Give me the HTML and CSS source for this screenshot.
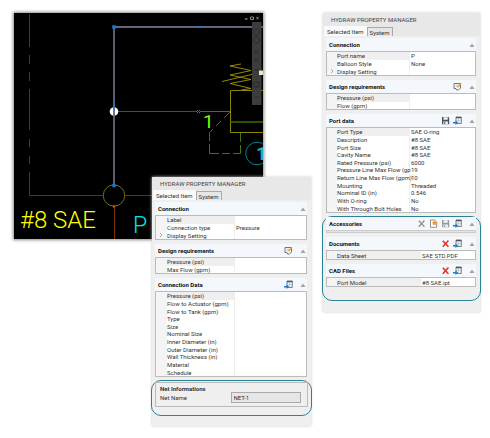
FILE: index.html
```
<!DOCTYPE html>
<html lang="en">
<head>
    <meta charset="UTF-8">
    <title>Hydraw Property Manager</title>
    <link rel="stylesheet" href="styles.css">
</head>
<body>
<svg class="symbols" aria-hidden="true">
    <symbol id="up" viewBox="0 0 6 6"><path d="M0.5 5L3 1.5L5.500 5Z" fill="#a3a3a3"/></symbol>
    <symbol id="more" viewBox="0 0 6 6"><path d="M2 1L4 3L2 5" fill="none" stroke="#999" stroke-width="0.8"/></symbol>
    <symbol id="note" viewBox="0 0 9 9">
        <path d="M1 1.500H7.500V6L5.500 8H3.500L3 6.500H1Z" fill="#fff" stroke="#666" stroke-width="0.9"/>
        <path d="M2.500 3.200H5M2.500 4.800H4" stroke="#999" stroke-width="0.6"/>
        <path d="M4.500 5.300L8 1.300" stroke="#e8952e" stroke-width="1.4"/>
    </symbol>
    <symbol id="link" viewBox="0 0 9 9">
        <path d="M3 1H8.300V7.500H3Z" fill="#eef2f6" stroke="#5d6670" stroke-width="0.8"/>
        <path d="M3 1.600H8.300" stroke="#4a545e" stroke-width="1.3"/>
        <path d="M5.600 2V7.500M3 4.500H8.300" stroke="#a9b3bd" stroke-width="0.5"/>
        <path d="M0 6H2.500V4.400L5.200 6.700L2.500 9V7.500H0Z" fill="#1c7cd0"/>
    </symbol>
    <symbol id="save" viewBox="0 0 9 9">
        <path d="M1 1H7.500L8.200 1.700V8.200H1Z" fill="currentColor"/>
        <path d="M2.500 1.300H6.700V3.700H2.500ZM2.300 5.400H6.900V8H2.300Z" fill="#f4f6f8"/>
        <path d="M3.200 6H4.300V8H3.200Z" fill="currentColor"/>
    </symbol>
    <symbol id="new" viewBox="0 0 9 9">
        <path d="M1.500 1H5.500L7.700 3V8.300H1.500Z" fill="#fff" stroke="#777" stroke-width="0.8"/>
        <path d="M5.500 1.200L6.300 2.800L8 3.200L6.900 4.500L7 6.200L5.400 5.500L3.800 6.200L4 4.500L2.800 3.200L4.600 2.800Z" fill="#f09a2c"/>
    </symbol>
    <symbol id="cross" viewBox="0 0 9 9"><path d="M1.800 1.800L7.400 7.800M7.400 1.500L1.800 7.800" stroke="currentColor" stroke-width="1.6"/></symbol>
</svg>

<main class="page">
    <div class="stage">
        <svg class="drawing" viewBox="0 0 249 226" role="img" aria-label="Hydraulic schematic">
            <rect width="249" height="226" fill="#000"/>
            <g transform="translate(-14 -13)" fill="none">
                <!-- manifold boundary -->
                <path d="M29.500 14V47M29.500 55V64M29.500 72V81M29.500 89V130M29.500 139V147M29.500 156V164M29.500 172V195.500H103M125 195.500H155" stroke="#7d107d"/>
                <!-- valve and spring -->
                <path d="M241 64L230 66L251 70.500L230 75L251 79.500L230 83.500L251 88.500L241 90M222 81.500L262 72" stroke="#a39900" stroke-width="0.9"/>
                <path d="M263 90.500H230.500V132.500H263" stroke="#8f8600"/>
                <path d="M230 122H263" stroke="#3d6b00" stroke-width="1.300"/>
                <path d="M230 112L224 118M221 121L216 126M213 129L209.500 132.500V141M209.500 144V153.500H219M222 153.500H230M233 153.500H240.500V145M240.500 142V133" stroke="#437600"/>
                <!-- pilot line -->
                <path d="M118 111.500H197" stroke="#8a3a08"/>
                <path d="M200 111.500H230" stroke="#3d7a06"/>
                <path d="M197 110L200 113M200 110L197 113" stroke="#d4401a"/>
                <!-- selected connection -->
                <circle cx="114" cy="111.500" r="4.300" fill="#fff"/>
                <path d="M263 27H114V185" stroke="#66657f" stroke-width="1.800"/>
                <path d="M112.200 25.200H115.800V28.800H112.200ZM196.500 26.300H201V27.700H196.500ZM113.300 104H114.700V109H113.300Z" fill="#1279dc"/>
                <!-- port -->
                <circle cx="114" cy="195.500" r="10.700" stroke="#857d00" stroke-width="0.9"/>
                <path d="M114.500 207V239" stroke="#7a3206"/>
                <circle cx="114" cy="185.500" r="1.900" fill="#1279dc"/>
                <circle cx="114" cy="206.500" r="1.200" fill="#e04a10"/>
                <circle cx="257" cy="153.500" r="11.300" stroke="#0d7f86"/>
                <!-- view controls -->
                <path d="M252 22H261.500V105H252Z" fill="#3d3d3d"/>
                <path d="M256.500 29A3 3 0 1 1 256.400 29M256.500 37A3 3 0 1 1 256.400 37M254 50L259 55M259 50L254 55M254 58L259 63M259 58L254 63M254 70H259M254 82H259V87H254ZM255 96L257 98L259 96" stroke="#292929"/>
                <path d="M259 70.500H263V75H259Z" fill="#e6e6c4"/>
                <path d="M245 19H247.500" stroke="#bbb"/>
                <path d="M250.500 17H253.500V19.500H250.500ZM256.500 16.800L258.500 19.300M258.500 16.800L256.500 19.300" stroke="#aaa" stroke-width="0.8"/>
            </g>
            <text class="cad-text port-label" x="6" y="215">#8 SAE</text>
            <text class="cad-text port-name" x="119" y="220">P</text>
            <text class="cad-text valve-port" x="189" y="115">1</text>
            <text class="cad-text balloon" x="242" y="147">1</text>
        </svg>

        <section class="panel connection-panel">
            <h1 class="title">HYDRAW PROPERTY MANAGER</h1>
            <div class="tabs" role="tablist">
                <button class="tab active" role="tab">Selected Item</button>
                <button class="tab" role="tab">System</button>
            </div>

            <div class="group">
                <div class="head"><h2>Connection</h2><button class="fold" aria-label="Collapse"><svg><use href="#up"/></svg></button></div>
                <table class="props three">
                    <tr class="current"><td></td><th scope="row">Label</th><td></td></tr>
                    <tr><td></td><th scope="row">Connection type</th><td>Pressure</td></tr>
                    <tr><td><button class="more" aria-label="Expand"><svg><use href="#more"/></svg></button></td><th scope="row">Display Setting</th><td></td></tr>
                </table>
            </div>

            <div class="group">
                <div class="head"><h2>Design requirements</h2><button class="tool" aria-label="Edit"><svg><use href="#note"/></svg></button><button class="fold" aria-label="Collapse"><svg><use href="#up"/></svg></button></div>
                <table class="props two">
                    <tr class="current"><td></td><th scope="row">Pressure (psi)</th><td></td></tr>
                    <tr><td></td><th scope="row">Max Flow (gpm)</th><td></td></tr>
                </table>
            </div>

            <div class="group">
                <div class="head"><h2>Connection Data</h2><button class="tool" aria-label="Load"><svg><use href="#link"/></svg></button><button class="fold" aria-label="Collapse"><svg><use href="#up"/></svg></button></div>
                <table class="props eleven">
                    <tr class="current"><td></td><th scope="row">Pressure (psi)</th><td></td></tr>
                    <tr><td></td><th scope="row">Flow to Actuator (gpm)</th><td></td></tr>
                    <tr><td></td><th scope="row">Flow to Tank (gpm)</th><td></td></tr>
                    <tr><td></td><th scope="row">Type</th><td></td></tr>
                    <tr><td></td><th scope="row">Size</th><td></td></tr>
                    <tr><td></td><th scope="row">Nominal Size</th><td></td></tr>
                    <tr><td></td><th scope="row">Inner Diameter (in)</th><td></td></tr>
                    <tr><td></td><th scope="row">Outer Diameter (in)</th><td></td></tr>
                    <tr><td></td><th scope="row">Wall Thickness (in)</th><td></td></tr>
                    <tr><td></td><th scope="row">Material</th><td></td></tr>
                    <tr><td></td><th scope="row">Schedule</th><td></td></tr>
                </table>
            </div>

            <div class="callout">
                <div class="net">
                    <h2>Net Informations</h2>
                    <div class="net-row">
                        <label for="net-name">Net Name</label>
                        <input type="text" id="net-name" value="NET-1" readonly>
                    </div>
                </div>
            </div>
        </section>
    </div>

    <section class="panel port-panel">
        <h1 class="title">HYDRAW PROPERTY MANAGER</h1>
        <div class="tabs" role="tablist">
            <button class="tab active" role="tab">Selected Item</button>
            <button class="tab" role="tab">System</button>
        </div>

        <div class="group">
            <div class="head"><h2>Connection</h2><button class="fold" aria-label="Collapse"><svg><use href="#up"/></svg></button></div>
            <table class="props three">
                <tr class="current"><td></td><th scope="row">Port name</th><td>P</td></tr>
                <tr><td></td><th scope="row">Balloon Style</th><td>None</td></tr>
                <tr><td><button class="more" aria-label="Expand"><svg><use href="#more"/></svg></button></td><th scope="row">Display Setting</th><td></td></tr>
            </table>
        </div>

        <div class="group">
            <div class="head"><h2>Design requirements</h2><button class="tool" aria-label="Edit"><svg><use href="#note"/></svg></button><button class="fold" aria-label="Collapse"><svg><use href="#up"/></svg></button></div>
            <table class="props two">
                <tr class="current"><td></td><th scope="row">Pressure (psi)</th><td></td></tr>
                <tr><td></td><th scope="row">Flow (gpm)</th><td></td></tr>
            </table>
        </div>

        <div class="group">
            <div class="head"><h2>Port data</h2><button class="tool" aria-label="Save"><svg><use href="#save"/></svg></button><button class="tool" aria-label="Load"><svg><use href="#link"/></svg></button><button class="fold" aria-label="Collapse"><svg><use href="#up"/></svg></button></div>
            <table class="props eleven">
                <tr class="current"><td></td><th scope="row">Port Type</th><td>SAE O-ring</td></tr>
                <tr><td></td><th scope="row">Description</th><td>#8 SAE</td></tr>
                <tr><td></td><th scope="row">Port Size</th><td>#8 SAE</td></tr>
                <tr><td></td><th scope="row">Cavity Name</th><td>#8 SAE</td></tr>
                <tr><td></td><th scope="row">Rated Pressure (psi)</th><td>6000</td></tr>
                <tr><td></td><th scope="row">Pressure Line Max Flow (gp</th><td>19</td></tr>
                <tr><td></td><th scope="row">Return Line Max Flow (gpm)</th><td>10</td></tr>
                <tr><td></td><th scope="row">Mounting</th><td>Threaded</td></tr>
                <tr><td></td><th scope="row">Nominal ID (in)</th><td>0.546</td></tr>
                <tr><td></td><th scope="row">With O-ring</th><td>No</td></tr>
                <tr><td></td><th scope="row">With Through Bolt Holes</th><td>No</td></tr>
            </table>
        </div>

        <div class="callout files">
            <div class="group">
                <div class="head"><h2>Accessories</h2><button class="tool off" aria-label="Delete"><svg><use href="#cross"/></svg></button><button class="tool" aria-label="New"><svg><use href="#new"/></svg></button><button class="tool off" aria-label="Save"><svg><use href="#save"/></svg></button><button class="tool" aria-label="Load"><svg><use href="#link"/></svg></button><button class="fold" aria-label="Collapse"><svg><use href="#up"/></svg></button></div>
                <div class="empty"></div>
            </div>
            <div class="group">
                <div class="head"><h2>Documents</h2><button class="tool delete" aria-label="Delete"><svg><use href="#cross"/></svg></button><button class="tool" aria-label="Load"><svg><use href="#link"/></svg></button><button class="fold" aria-label="Collapse"><svg><use href="#up"/></svg></button></div>
                <table class="props file">
                    <tr class="current"><td></td><th scope="row">Data Sheet</th><td>SAE STD.PDF</td></tr>
                </table>
            </div>
            <div class="group">
                <div class="head"><h2>CAD Files</h2><button class="tool delete" aria-label="Delete"><svg><use href="#cross"/></svg></button><button class="tool" aria-label="Load"><svg><use href="#link"/></svg></button><button class="fold" aria-label="Collapse"><svg><use href="#up"/></svg></button></div>
                <table class="props file">
                    <tr class="current"><td></td><th scope="row">Port Model</th><td>#8 SAE.ipt</td></tr>
                </table>
            </div>
        </div>
    </section>
</main>
</body>
</html>
```
FILE: styles.css
```
* {
    box-sizing: border-box;
}

body {
    margin: 0;
    background: #fff;
    color: #333;
    font: 6px/7px Roboto, "Liberation Sans", sans-serif;
}

h1, h2 {
    margin: 0;
    font-size: 6px;
}

button {
    padding: 0;
    border: none;
    background: none;
    color: inherit;
    font: inherit;
    cursor: pointer;
}

.symbols {
    display: none;
}

.page {
    display: flex;
    align-items: flex-start;
    gap: 12px;
    padding: 13px 10px 12px 14px;
}

.stage {
    flex: 297;
    display: grid;
    grid-template-columns: 138fr 111fr 48fr;
    grid-template-rows: 164px auto;
}

.drawing {
    grid-area: 1 / 1 / 3 / 3;
    display: block;
    width: 100%;
    box-shadow: 0 0 3px 1px #888;
}

.cad-text {
    font-family: Roboto, sans-serif;
    font-weight: 300;
}

.port-label {
    font-size: 24px;
    fill: #ffff00;
}

.port-name {
    font-size: 23px;
    fill: #00e5ee;
}

.valve-port {
    font-size: 19px;
    font-weight: 400;
    fill: #7dff00;
}

.balloon {
    font-size: 19px;
    font-weight: 700;
    fill: #19b5be;
}

.panel {
    background: #efefef;
    box-shadow: 0 0 3px #ccc;
}

.connection-panel {
    grid-area: 2 / 2 / 3 / 4;
    z-index: 1;
    padding-bottom: 10px;
}

.port-panel {
    flex: 157;
    padding-bottom: 11px;
}

.title {
    padding: 3px 8px;
    background: #e8e8e8;
    color: #444;
    font-weight: 400;
}

.tabs {
    display: flex;
    align-items: flex-end;
    padding-left: 1px;
    background: #e8e8e8;
}

.tab {
    height: 9px;
    padding: 0 2px;
    border: 1px solid #aaa;
    border-bottom: none;
    background: #e6e6e6;
}

.tab.active {
    height: 10px;
    border-color: #fafafa;
    background: #fafafa;
}

.group {
    margin: 0 4px 4px 3px;
}

.tabs + .group {
    margin-top: 2px;
}

.head {
    display: flex;
    align-items: center;
    gap: 3px;
    height: 13px;
    padding: 0 1px 0 3px;
    background: #f4f8fd;
}

.head h2 {
    flex: 1;
    color: #111;
}

.tool,
.tool svg {
    display: block;
    width: 9px;
    height: 9px;
    color: #4b5560;
}

.tool.off svg {
    color: #999;
}

.tool.delete svg {
    color: #e0342b;
}

.fold,
.fold svg,
.more,
.more svg {
    display: block;
    width: 6px;
    height: 6px;
}

.fold {
    margin-left: 4px;
}

.props {
    width: 100%;
    table-layout: fixed;
    border: 1px solid #bbb;
    border-collapse: separate;
    border-spacing: 0;
    background: #fff;
}

.props.two {
    height: 17px;
}

.props.three {
    height: 25px;
}

.props.eleven {
    height: 86px;
}

.props.file {
    height: 10px;
}

.props th,
.props td {
    padding: 0;
    font-weight: 400;
    text-align: left;
    white-space: nowrap;
    vertical-align: middle;
}

.props td:first-child {
    width: 11px;
    padding-left: 2px;
    background: #f4f4f4;
}

.props th {
    width: 68px;
    border-right: 1px solid #eee;
}

.port-panel .props td:first-child {
    width: 10px;
}

.port-panel .props th {
    width: 73px;
}

.props td:last-child {
    padding-left: 1px;
}

.props .current th {
    background: #efefef;
}

.port-panel .props.file th {
    width: 84px;
}

.callout {
    margin: -1px -1px 0;
    border: 1px solid #2a8296;
    border-radius: 10px;
}

.files {
    padding-bottom: 9px;
}

.empty {
    height: 3px;
    border: 1px solid #ccc;
    background: #e4e4e4;
}

.net {
    margin: 1px 3px 8px;
    padding: 2px 6px 3px 4px;
    border: 1px solid #bbb;
}

.net-row {
    display: flex;
    align-items: center;
    justify-content: space-between;
}

.net-row input {
    width: 50%;
    height: 11px;
    padding: 0 2px;
    border: 1px solid #aaa;
    background: #e6e6e6;
    color: #333;
    font: inherit;
}
```
